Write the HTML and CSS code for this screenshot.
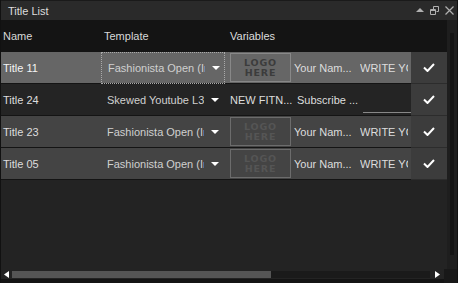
FILE: index.html
```html
<!DOCTYPE html>
<html lang="en">
<head>
  <meta charset="UTF-8">
  <title>Title List</title>
  <link rel="stylesheet" href="styles.css">
</head>
<body>

  <div class="window">
    <div class="titlebar">
      <span class="title">Title List</span>
      <div class="win-btns">
        <svg width="8" height="5" viewBox="0 0 8 5"><path d="M0 4 L4 0 L8 4 Z" fill="#b0b0b0"/></svg>
        <svg width="9" height="10" viewBox="0 0 9 10"><path d="M3.5 0.5 H8.5 V5.5 H6.5 M0.5 3.5 H5.5 V8.5 H0.5 Z M3.5 0.5 V3.5 M0.5 4.5 H5.5" fill="none" stroke="#b0b0b0"/></svg>
        <svg width="9" height="9" viewBox="0 0 9 9"><path d="M0.5 0.5 L8.5 8.5 M8.5 0.5 L0.5 8.5" stroke="#b0b0b0" stroke-width="1.2"/></svg>
      </div>
    </div>

    <div class="main">
      <div class="grid">
        <div class="header">
          <div class="c-name">Name</div>
          <div class="c-tpl">Template</div>
          <div class="c-vars">Variables</div>
        </div>

        <div class="row selected">
          <div class="c-name">Title 11</div>
          <div class="c-tpl focus"><span class="tpl-text">Fashionista Open (Ir</span><span class="arrow"></span></div>
          <div class="c-vars">
            <div class="logo"><span>LOGO</span><span>HERE</span></div>
            <div class="v-text">Your Nam...</div>
            <div class="v-write">WRITE YOUR</div>
          </div>
          <div class="c-check"><svg width="12" height="9" viewBox="0 0 12 9"><path d="M1 4.5 L4.5 8 L11 1" fill="none" stroke="#fff" stroke-width="2"/></svg></div>
        </div>

        <div class="row dark">
          <div class="c-name">Title 24</div>
          <div class="c-tpl"><span class="tpl-text">Skewed Youtube L3r</span><span class="arrow"></span></div>
          <div class="c-vars">
            <div class="v-first">NEW FITN...</div>
            <div class="v-text">Subscribe ...</div>
            <div class="v-input"></div>
          </div>
          <div class="c-check"><svg width="12" height="9" viewBox="0 0 12 9"><path d="M1 4.5 L4.5 8 L11 1" fill="none" stroke="#fff" stroke-width="2"/></svg></div>
        </div>

        <div class="row">
          <div class="c-name">Title 23</div>
          <div class="c-tpl"><span class="tpl-text">Fashionista Open (Ir</span><span class="arrow"></span></div>
          <div class="c-vars">
            <div class="logo"><span>LOGO</span><span>HERE</span></div>
            <div class="v-text">Your Nam...</div>
            <div class="v-write">WRITE YOUR</div>
          </div>
          <div class="c-check"><svg width="12" height="9" viewBox="0 0 12 9"><path d="M1 4.5 L4.5 8 L11 1" fill="none" stroke="#fff" stroke-width="2"/></svg></div>
        </div>

        <div class="row">
          <div class="c-name">Title 05</div>
          <div class="c-tpl"><span class="tpl-text">Fashionista Open (Ir</span><span class="arrow"></span></div>
          <div class="c-vars">
            <div class="logo"><span>LOGO</span><span>HERE</span></div>
            <div class="v-text">Your Nam...</div>
            <div class="v-write">WRITE YOUR</div>
          </div>
          <div class="c-check"><svg width="12" height="9" viewBox="0 0 12 9"><path d="M1 4.5 L4.5 8 L11 1" fill="none" stroke="#fff" stroke-width="2"/></svg></div>
        </div>
      </div>

      <div class="vscroll">
        <div class="vthumb"></div>
      </div>
    </div>

    <div class="bottom">
      <div class="hscroll">
        <svg class="harrow" width="5" height="7" viewBox="0 0 5 7"><path d="M5 0 L0 3.5 L5 7 Z" fill="#fff"/></svg>
        <div class="hthumb"></div>
        <div class="htrack"></div>
        <svg class="harrow" width="5" height="7" viewBox="0 0 5 7"><path d="M0 0 L5 3.5 L0 7 Z" fill="#fff"/></svg>
      </div>
      <div class="corner"></div>
    </div>
  </div>

</body>
</html>
```

FILE: styles.css
```css
body {
  margin: 0;
  background: #111;
  font-family: "Liberation Sans", Arial, sans-serif;
  font-size: 11px;
}

.window {
  width: 458px;
  height: 283px;
  display: flex;
  flex-direction: column;
  background: #232323;
  border-left: 1px solid #111;
  border-right: 1px solid #111;
  box-sizing: border-box;
}

.titlebar {
  height: 20px;
  display: flex;
  align-items: center;
  justify-content: space-between;
  background: #2a2a2a;
  border-top: 1px solid #1a1a1a;
  box-sizing: border-box;
}

.title {
  color: #ddd;
  padding-left: 7px;
}

.win-btns {
  display: flex;
  align-items: center;
  gap: 6px;
  padding-right: 3px;
}

.main {
  flex: 1;
  display: flex;
}

.grid {
  flex: 1;
  display: flex;
  flex-direction: column;
}

.header {
  height: 32px;
  display: flex;
  align-items: center;
  background: #141414;
  color: #d8d8d8;
}

.row {
  height: 31px;
  display: flex;
  align-items: center;
  background: #444;
  border-bottom: 1px solid #141414;
  color: #ddd;
}

.row.selected {
  background: #666;
  color: #f4f4f4;
}

.row.dark {
  background: #242424;
}

.c-name {
  width: 98px;
  padding-left: 2px;
  white-space: nowrap;
}

.c-tpl {
  width: 124px;
  height: 31px;
  padding-left: 6px;
  display: flex;
  align-items: center;
  box-sizing: border-box;
  color: #d0d0d0;
}

.c-tpl.focus {
  border: 1px dotted #aaa;
  height: 32px;
  margin-top: 1px;
}

.tpl-text {
  width: 97px;
  overflow: hidden;
  white-space: nowrap;
}

.arrow {
  margin-left: 7px;
  border-left: 4px solid transparent;
  border-right: 4px solid transparent;
  border-top: 4px solid #fff;
}

.header .c-tpl {
  height: auto;
  padding-left: 3px;
  color: #d8d8d8;
}

.c-vars {
  flex: 1;
  display: flex;
  align-items: center;
  padding-left: 5px;
  overflow: hidden;
  white-space: nowrap;
  color: #ddd;
}

.header .c-vars {
  padding-left: 5px;
}

.logo {
  width: 59px;
  height: 27px;
  border: 1px solid #6c6c6c;
  display: flex;
  flex-direction: column;
  align-items: center;
  justify-content: center;
  font-family: "DejaVu Sans", sans-serif;
  font-weight: bold;
  font-size: 9.5px;
  line-height: 10px;
  letter-spacing: 0.8px;
  color: #555;
}

.selected .logo {
  border-color: #888;
  color: #3c3c3c;
}

.v-first {
  width: 64px;
}

.v-text {
  width: 66px;
  padding-left: 3px;
}

.v-write {
  width: 48px;
  overflow: hidden;
}

.v-input {
  width: 48px;
  height: 13px;
  margin-top: 12px;
  border-bottom: 1px solid #888;
}

.c-check {
  width: 36px;
  height: 32px;
  margin-bottom: -1px;
  display: flex;
  align-items: center;
  justify-content: center;
  background: #3c3c3c;
  border-bottom: 1px solid #2c2c2c;
  box-sizing: border-box;
}

.vscroll {
  width: 13px;
  background: #1e1e1e;
  padding-top: 13px;
  padding-bottom: 14px;
  display: flex;
  justify-content: center;
  box-sizing: border-box;
}

.vthumb {
  width: 4px;
  background: #141414;
}

.bottom {
  height: 14px;
  display: flex;
  background: #141414;
}

.hscroll {
  flex: 1;
  height: 10px;
  display: flex;
  align-items: center;
  background: #232323;
  padding: 0 4px 0 3px;
}

.hthumb {
  width: 259px;
  height: 7px;
  margin-left: 3px;
  background: #555;
}

.htrack {
  flex: 1;
  height: 7px;
  background: #1a1a1a;
  margin-right: 5px;
}

.corner {
  width: 13px;
  background: #181818;
}
```
